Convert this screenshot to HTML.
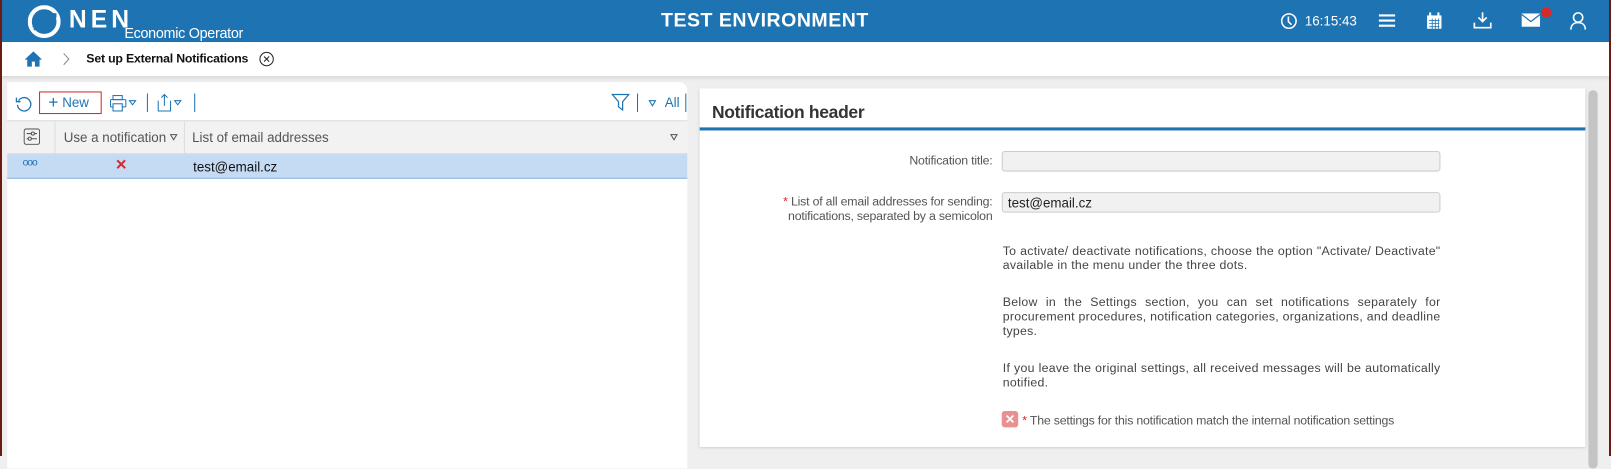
<!DOCTYPE html>
<html><head><meta charset="utf-8"><style>
*{box-sizing:border-box;margin:0;padding:0}
body{width:1611px;height:456px;overflow:hidden;background:#efefef;font-family:"Liberation Sans",sans-serif;position:relative}
.wrap{position:absolute;left:0;top:0;width:1568px;height:444px;transform-origin:0 0;transform:scale(1.02742)}
.bl{position:absolute;top:0;width:2px;height:456px;background:#6b1a14;z-index:9}
.top{position:absolute;left:0;top:0;width:1568px;height:41px;background:#1e74b2;color:#fff}
.bc{position:absolute;left:0;top:41px;width:1568px;height:33px;background:#fff;box-shadow:0 2px 4px rgba(0,0,0,.12)}
.abs{position:absolute}
.lp{position:absolute;left:7px;top:80px;width:662px;height:376px;background:#fff;border-radius:0 8px 0 0}
.rp{position:absolute;left:681px;top:86px;width:862px;height:349px;background:#fff;box-shadow:0 1px 3px rgba(0,0,0,.15)}
.lbl{position:absolute;right:602px;text-align:right;color:#555;font-size:12px;line-height:14px;letter-spacing:-.2px}
.txt{position:absolute;left:976px;width:426px;color:#444;font-size:12px;line-height:14px;text-align:justify;letter-spacing:.25px}
.inp{position:absolute;left:975px;width:427px;height:20px;background:#f1f1f1;border:1px solid #ccc;border-radius:3px;font-size:13px;padding:2px 5px;color:#222}
</style></head><body>
<div class="bl" style="left:0"></div><div class="bl" style="right:0"></div>
<div class="wrap">
<div class="top">
 <svg class="abs" style="left:27px;top:5px" width="32" height="32" viewBox="0 0 32 32"><circle cx="16" cy="16" r="14" fill="none" stroke="#fff" stroke-width="4"/><path d="M4 22 C10 14 20 10 28 12 L28 8 C18 6 8 12 4 22Z" fill="#1e74b2"/><path d="M6 24 C12 18 20 16 26 18" stroke="#1e74b2" stroke-width="2" fill="none"/></svg>
 <div class="abs" style="left:67px;top:6px;font-size:24px;font-weight:bold;letter-spacing:4px">NEN</div>
 <div class="abs" style="left:121px;top:24px;font-size:14px;letter-spacing:-.3px">Economic Operator</div>
 <div class="abs" style="left:0;width:1489px;top:10px;text-align:center;font-size:19px;font-weight:bold;letter-spacing:.5px">TEST ENVIRONMENT</div>
 <svg class="abs" style="left:1246px;top:12px" width="17" height="17" viewBox="0 0 17 17"><circle cx="8.5" cy="8.5" r="7" fill="none" stroke="#fff" stroke-width="1.5"/><path d="M8 4v5l3 3" stroke="#fff" stroke-width="1.5" fill="none"/></svg>
 <div class="abs" style="left:1270px;top:13px;font-size:13px">16:15:43</div>
 <svg class="abs" style="left:1342px;top:13px" width="16" height="14"><path d="M0 2h16M0 7h16M0 12h16" stroke="#fff" stroke-width="2"/></svg>
 <svg class="abs" style="left:1388px;top:12px" width="16" height="17"><rect x="1" y="3" width="14" height="13" fill="#fff"/><path d="M4 0v4M12 0v4" stroke="#fff" stroke-width="2"/><path d="M3 8h10M3 11h10M3 14h10M6 6v10M9 6v10M12 6v10" stroke="#1e74b2" stroke-width=".8"/></svg>
 <svg class="abs" style="left:1434px;top:11px" width="18" height="18"><path d="M9 1v9M5 6l4 4 4-4" stroke="#fff" stroke-width="1.6" fill="none"/><path d="M1 11v5h16v-5" stroke="#fff" stroke-width="1.6" fill="none"/></svg>
 <svg class="abs" style="left:1481px;top:13px" width="18" height="14"><rect width="18" height="13" fill="#fff"/><path d="M0 1l9 7 9-7" stroke="#1e74b2" stroke-width="1.2" fill="none"/></svg>
 <div class="abs" style="left:1500px;top:7px;width:10px;height:10px;border-radius:5px;background:#d42a2a"></div>
 <svg class="abs" style="left:1528px;top:11px" width="16" height="18"><circle cx="8" cy="6" r="4.5" fill="none" stroke="#fff" stroke-width="1.5"/><path d="M1 18c0-5 3-7 7-7s7 2 7 7" fill="none" stroke="#fff" stroke-width="1.5"/></svg>
</div>
<div class="bc">
 <svg class="abs" style="left:24px;top:9px" width="17" height="15"><path d="M8.5 0L0 8h2.5v7h4.5v-5h3v5h4.5V8H17Z" fill="#1e74b2"/></svg>
 <svg class="abs" style="left:61px;top:10px" width="8" height="13"><path d="M1 1l5 5.5L1 12" stroke="#888" fill="none"/></svg>
 <div class="abs" style="left:84px;top:9px;font-size:12px;font-weight:bold;color:#111;letter-spacing:-.2px">Set up External Notifications</div>
 <svg class="abs" style="left:252px;top:9px" width="15" height="15"><circle cx="7.5" cy="7.5" r="6.5" fill="none" stroke="#222"/><path d="M5 5l5 5M10 5l-5 5" stroke="#222"/></svg>
</div>
<div class="lp">
 <svg class="abs" style="left:8px;top:12px" width="17" height="17"><path d="M3 6A6.5 6.5 0 1 1 2 10" fill="none" stroke="#1e74b2" stroke-width="1.3"/><path d="M1 3v4h4" fill="none" stroke="#1e74b2" stroke-width="1.3"/></svg>
 <div class="abs" style="left:31px;top:9px;width:61px;height:22px;border:1px solid #d9262b;color:#1e74b2;font-size:13px;line-height:20px;padding-left:8px"><span style="font-size:17px;vertical-align:-1px">+</span> New</div>
 <svg class="abs" style="left:100px;top:12px" width="32" height="17"><rect x="3" y="1" width="9" height="4" fill="none" stroke="#1e74b2"/><rect x="0.5" y="5" width="15" height="7" rx="1" fill="none" stroke="#1e74b2"/><rect x="3" y="9" width="9" height="7" fill="#fff" stroke="#1e74b2"/><path d="M19 6l3 4 3-4z" fill="none" stroke="#1e74b2"/></svg>
 <div class="abs" style="left:136px;top:11px;width:1px;height:18px;background:#1e74b2"></div>
 <svg class="abs" style="left:146px;top:10px" width="28" height="19"><path d="M1 8v10h12V8" fill="none" stroke="#1e74b2"/><path d="M7 13V2M4 5l3-3 3 3" fill="none" stroke="#1e74b2"/><path d="M17 8l3 4 3-4z" fill="none" stroke="#1e74b2"/></svg>
 <div class="abs" style="left:182px;top:11px;width:1px;height:18px;background:#1e74b2"></div>
 <svg class="abs" style="left:588px;top:11px" width="18" height="17"><path d="M1 1h16l-6 7v8l-4-3V8z" fill="none" stroke="#1e74b2" stroke-width="1.2"/></svg>
 <div class="abs" style="left:613px;top:11px;width:1px;height:18px;background:#1e74b2"></div>
 <svg class="abs" style="left:624px;top:17px" width="8" height="7"><path d="M1 1h6L4 6z" fill="none" stroke="#1e74b2"/></svg>
 <div class="abs" style="left:640px;top:12px;font-size:13px;color:#1e74b2">All</div>
 <div class="abs" style="left:660px;top:11px;width:1px;height:18px;background:#1e74b2"></div>
 <div class="abs" style="left:0;top:37px;width:662px;height:33px;background:#f2f2f2;border-top:1px solid #ddd;border-bottom:1px solid #ddd"></div>
 <div class="abs" style="left:46px;top:38px;width:1px;height:32px;background:#ddd"></div>
 <div class="abs" style="left:172px;top:38px;width:1px;height:32px;background:#ddd"></div>
 <svg class="abs" style="left:16px;top:45px" width="16" height="16"><rect x=".5" y=".5" width="15" height="15" rx="2" fill="none" stroke="#555"/><path d="M3 5h10M3 10h10" stroke="#555"/><circle cx="9" cy="5" r="1.5" fill="#fff" stroke="#555"/><circle cx="6" cy="10" r="1.5" fill="#fff" stroke="#555"/></svg>
 <div class="abs" style="left:55px;top:46px;font-size:13px;color:#555">Use a notification</div>
 <svg class="abs" style="left:158px;top:50px" width="8" height="7"><path d="M1 1h6L4 6z" fill="none" stroke="#555"/></svg>
 <div class="abs" style="left:180px;top:46px;font-size:13px;color:#555">List of email addresses</div>
 <svg class="abs" style="left:645px;top:50px" width="8" height="7"><path d="M1 1h6L4 6z" fill="none" stroke="#555"/></svg>
 <div class="abs" style="left:0;top:70px;width:662px;height:24px;background:#c5daf3;border-bottom:1px solid #8fb6e3"></div>
 <div class="abs" style="left:15px;top:73px;font-size:10px;color:#1e74b2;letter-spacing:-1px">ooo</div>
 <div class="abs" style="left:105px;top:72px;font-size:14px;font-weight:bold;color:#d42a2a">✕</div>
 <div class="abs" style="left:181px;top:75px;font-size:13px;color:#111">test@email.cz</div>
</div>
<div class="rp">
 <div class="abs" style="left:12px;top:14px;font-size:17px;font-weight:bold;color:#333;letter-spacing:-.3px">Notification header</div>
 <div class="abs" style="left:0;top:38px;width:862px;height:3px;background:#1e74b2"></div>
</div>
<div class="abs" style="left:1546px;top:88px;width:9px;height:368px;background:#c4c4c4;border-radius:4px"></div>
<div class="lbl" style="top:149px">Notification title:</div>
<div class="inp" style="top:147px"></div>
<div class="lbl" style="top:189px"><span style="color:#d42a2a">*</span> List of all email addresses for sending:<br>notifications, separated by a semicolon</div>
<div class="inp" style="top:187px">test@email.cz</div>
<div class="txt" style="top:237px">To activate/ deactivate notifications, choose the option "Activate/ Deactivate" available in the menu under the three dots.</div>
<div class="txt" style="top:287px">Below in the Settings section, you can set notifications separately for procurement procedures, notification categories, organizations, and deadline types.</div>
<div class="txt" style="top:351px">If you leave the original settings, all received messages will be automatically notified.</div>
<div class="abs" style="left:975px;top:400px;width:16px;height:16px;background:#e99090;border-radius:3px;color:#fff;font-size:12px;font-weight:bold;text-align:center;line-height:16px">✕</div>
<div class="abs" style="left:995px;top:402px;font-size:12px;color:#555;letter-spacing:-.2px"><span style="color:#d42a2a">*</span> The settings for this notification match the internal notification settings</div>
</div>
</body></html>
